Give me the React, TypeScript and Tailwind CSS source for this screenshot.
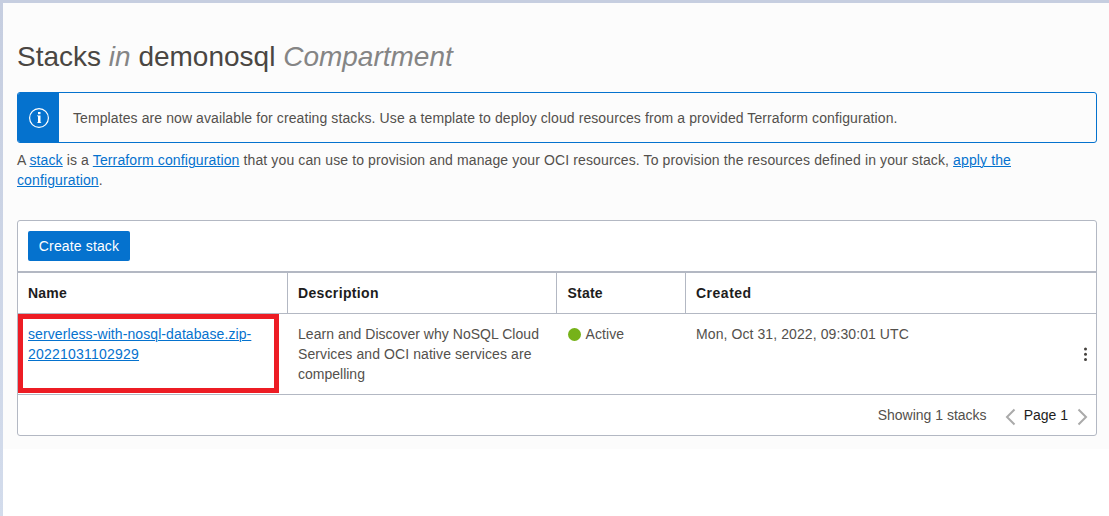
import React from "react";

const link = "text-[#0572ce] underline underline-offset-[1px] decoration-1";

function InfoBanner() {
  return (
    <div className="flex h-[51px] overflow-hidden rounded-[3px] border border-[#0572ce]">
      <div className="flex w-[41px] items-center justify-center bg-[#0572ce]">
        <svg width="22" height="22" viewBox="0 0 22 22" fill="none" className="ml-px">
          <circle cx="11" cy="11" r="9.4" stroke="white" strokeWidth="1.2" />
          <rect x="10" y="5" width="2.5" height="2.2" fill="white" />
          <path d="M9 8.5H12.5V15.3H13.2V16H9.3V15.3H10V9.3H9Z" fill="white" />
        </svg>
      </div>
      <p className="pl-[14px] pt-[15px] tracking-[0.095px]">
        Templates are now available for creating stacks. Use a template to deploy cloud resources from a provided
        Terraform configuration.
      </p>
    </div>
  );
}

function StacksTable() {
  return (
    <section className="mt-[30px] h-[216px] rounded-[3px] border border-[#b3b8c3] bg-white">
      <div className="flex h-[50px] items-center pl-[10px]">
        <button className="h-[30px] w-[102px] rounded-[2px] bg-[#0572ce] tracking-[0.14px] text-white">Create stack</button>
      </div>
      <div className="grid h-[43px] grid-cols-[270px_269px_129px_1fr] border-b border-t-2 border-[#b3b8c3] font-bold leading-[40px] tracking-[0.35px] text-[#1d1d1d]">
        <div className="border-r border-[#b3b8c3] pl-[10px] tracking-[0.2px]">Name</div>
        <div className="border-r border-[#b3b8c3] pl-[10px]">Description</div>
        <div className="border-r border-[#b3b8c3] pl-[10.5px] tracking-[0.2px]">State</div>
        <div className="pl-[10px] tracking-[0.5px]">Created</div>
      </div>
      <div className="grid h-[81px] grid-cols-[270px_269px_129px_1fr_22px] border-b border-[#b3b8c3] tracking-[0.09px]">
        <div className="h-[79px] w-[261px] border-[5px] border-[#ed1c24] pl-[5px] pt-[5px]">
          <a href="#" className={link}>
            serverless-with-nosql-database.zip-
            <br />
            <span className="tracking-[0.22px]">20221031102929</span>
          </a>
        </div>
        <div className="pl-[10px] pt-[10px]">
          <span className="tracking-[0.03px]">Learn and Discover why NoSQL Cloud</span>
          <br />
          Services and OCI native services are
          <br />
          <span className="tracking-normal">compelling</span>
        </div>
        <div className="flex items-start pl-[10.5px] pt-[10px]">
          <span className="mr-[5px] mt-[4px] size-[13px] rounded-full bg-[#76b219]" />
          Active
        </div>
        <div className="pl-[10px] pt-[10px]">Mon, Oct 31, 2022, 09:30:01 UTC</div>
        <div className="flex items-center justify-center">
          <svg width="4" height="14" viewBox="0 0 4 14" fill="#45423e">
            <circle cx="2.5" cy="2" r="1.5" />
            <circle cx="2.5" cy="7.3" r="1.5" />
            <circle cx="2.5" cy="12.5" r="1.5" />
          </svg>
        </div>
      </div>
      <div className="flex h-[40px] items-center justify-end pr-[8px]">
        <span>Showing 1 stacks</span>
        <svg width="11" height="18" viewBox="0 0 11 18" fill="none" stroke="#aaaaaa" strokeWidth="2" className="ml-[18px] mt-[3px]">
          <path d="M9.5 1.5L2 9L9.5 16.5" />
        </svg>
        <span className="ml-[8px] mr-[9px] text-[#1d1d1d]">Page 1</span>
        <svg width="11" height="18" viewBox="0 0 11 18" fill="none" stroke="#aaaaaa" strokeWidth="2" className="mt-[3px]">
          <path d="M1.5 1.5L9 9L1.5 16.5" />
        </svg>
      </div>
    </section>
  );
}

export default function App() {
  return (
    <div className="flex h-[516px] w-[1109px] flex-col overflow-hidden bg-white font-['Liberation_Sans',Arial,sans-serif] text-[14px] leading-[20px] text-[#53504c]">
      <div className="h-[3px] shrink-0 bg-[#c6cee0]" />
      <div className="flex flex-1">
        <div className="w-[3px] bg-linear-to-b from-[#c6cee0] to-[#d3dcec]" />
        <main className="h-[446px] flex-1 bg-[#fcfcfc] pl-[14px] pr-[12px] pt-[36px]">
          <h1 className="mb-[17px] text-[28px] leading-[36px] text-[#4a4642]">
            Stacks <em className="text-[#858585]">in</em> demonosql <em className="text-[#858585]">Compartment</em>
          </h1>
          <InfoBanner />
          <p className="mt-[7px] whitespace-nowrap tracking-[0.12px]">
            <span className="tracking-normal">A </span>
            <a href="#" className={link}>stack</a> is a <a href="#" className={link}>Terraform configuration</a> that you
            can use to provision and manage your OCI resources. To provision the resources defined in your stack,{" "}
            <a href="#" className={link}>
              apply the
              <br />
              configuration
            </a>
            .
          </p>
          <StacksTable />
        </main>
      </div>
    </div>
  );
}
